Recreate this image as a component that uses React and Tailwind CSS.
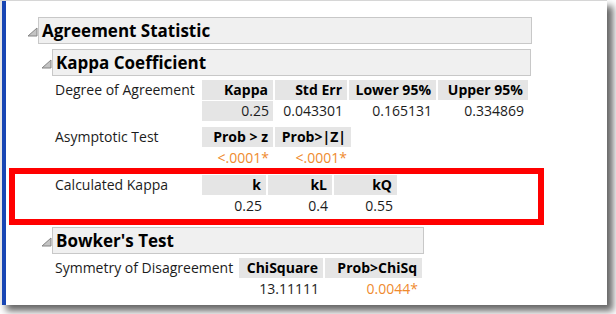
import React from 'react'

const Tri = () => (
    <svg width="11" height="10" viewBox="0 0 11 10" className="mt-[3px] shrink-0">
        <polygon points="1,9 10,1 10,9" fill="#c4c4c4" stroke="#858585" strokeWidth="1" strokeLinejoin="round" />
    </svg>
)

const Header = ({ title, width, indent }) => (
    <div className={`flex items-center ${indent}`}>
        <Tri />
        <div className={`${width} h-[27px] bg-[#f0f0f0] border border-[#c8c8c8] flex items-center pl-[3px]`}>
            <span className="text-[17px] font-bold text-black leading-none">{title}</span>
        </div>
    </div>
)

const HeadCell = ({ children, w }) => (
    <div className={`${w} h-[20px] bg-[#e5e5e5] flex items-center justify-end pr-[5px] text-[14px] font-bold text-black leading-none whitespace-nowrap`}>
        {children}
    </div>
)

const DataCell = ({ children, w, shaded, orange }) => (
    <div className={`${w} h-[20px] flex items-center justify-end pr-[4px] text-[14px] leading-none whitespace-nowrap ${shaded ? 'bg-[#e5e5e5]' : ''} ${orange ? 'text-[#ef8a2e]' : 'text-[#1c1c1c]'}`}>
        {children}
    </div>
)

const Table = ({ label, labelW, cols, rows, className }) => (
    <div className={`flex ${className}`}>
        <div className={`${labelW} h-[20px] flex items-center text-[14px] text-[#1c1c1c] leading-none whitespace-nowrap`}>{label}</div>
        <div className="flex flex-col gap-y-[1px]">
            <div className="flex gap-x-[2px]">
                {cols.map((c) => (
                    <HeadCell key={c.name} w={c.w}>{c.name}</HeadCell>
                ))}
            </div>
            <div className="flex gap-x-[2px]">
                {rows.map((r, i) => (
                    <DataCell key={i} w={cols[i].w} shaded={r.shaded} orange={r.orange}>{r.v}</DataCell>
                ))}
            </div>
        </div>
    </div>
)

export default function App() {
    return (
        <div className="w-[616px] h-[314px] bg-white" style={{ fontFamily: '"Open Sans", "Noto Sans", sans-serif' }}>
            <div className="relative w-[607px] h-[305px] bg-white border-t border-[#d6d6d6] shadow-[6px_6px_7px_rgba(0,0,0,0.6)] flex">
                <div className="w-[2px] bg-[#e6e6e6]" />
                <div className="w-[4px] bg-[#1846b4]" />
                <div className="flex-1 pt-[16px] pl-[21px]">
                    <Header title="Agreement Statistic" width="w-[494px]" indent="" />
                    <Header title="Kappa Coefficient" width="w-[479px]" indent="ml-[14px] mt-[5px]" />

                    <div className="ml-[28px]">
                        <Table
                            className="mt-[4px]"
                            label="Degree of Agreement"
                            labelW="w-[147px]"
                            cols={[
                                { name: 'Kappa', w: 'w-[71px]' },
                                { name: 'Std Err', w: 'w-[72px]' },
                                { name: 'Lower 95%', w: 'w-[87px]' },
                                { name: 'Upper 95%', w: 'w-[90px]' },
                            ]}
                            rows={[
                                { v: '0.25', shaded: true },
                                { v: '0.043301' },
                                { v: '0.165131' },
                                { v: '0.334869' },
                            ]}
                        />
                        <Table
                            className="mt-[6px]"
                            label="Asymptotic Test"
                            labelW="w-[147px]"
                            cols={[
                                { name: 'Prob > z', w: 'w-[71px]' },
                                { name: 'Prob>|Z|', w: 'w-[76px]' },
                            ]}
                            rows={[
                                { v: '<.0001*', orange: true },
                                { v: '<.0001*', orange: true },
                            ]}
                        />
                        <Table
                            className="mt-[7px]"
                            label="Calculated Kappa"
                            labelW="w-[147px]"
                            cols={[
                                { name: 'k', w: 'w-[64px]' },
                                { name: 'kL', w: 'w-[64px]' },
                                { name: 'kQ', w: 'w-[63px]' },
                            ]}
                            rows={[{ v: '0.25' }, { v: '0.4' }, { v: '0.55' }]}
                        />
                    </div>

                    <Header title="Bowker's Test" width="w-[372px]" indent="ml-[14px] mt-[11px]" />

                    <div className="ml-[28px]">
                        <Table
                            className="mt-[4px]"
                            label="Symmetry of Disagreement"
                            labelW="w-[184px]"
                            cols={[
                                { name: 'ChiSquare', w: 'w-[84px]' },
                                { name: 'Prob>ChiSq', w: 'w-[97px]' },
                            ]}
                            rows={[{ v: '13.11111' }, { v: '0.0044*', orange: true }]}
                        />
                    </div>
                </div>

                {/* red highlight annotation */}
                <div className="absolute left-[9px] top-[167px] w-[535px] h-[57px] border-[6px] border-[#ff0000]" />
            </div>
        </div>
    )
}
